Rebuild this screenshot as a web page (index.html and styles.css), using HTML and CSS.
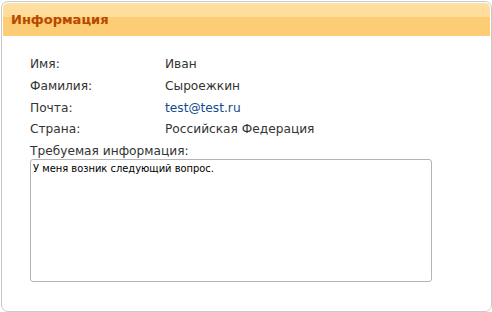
FILE: index.html
```html
<!DOCTYPE html>
<html lang="ru">
<head>
<meta charset="utf-8">
<title>Информация</title>
<link rel="stylesheet" href="styles.css">
</head>
<body>
<div class="panel">
  <div class="panel-head"><h2 class="panel-title">Информация</h2></div>
  <div class="panel-body">
    <dl class="info">
      <dt>Имя:</dt><dd>Иван</dd>
      <dt>Фамилия:</dt><dd>Сыроежкин</dd>
      <dt>Почта:</dt><dd><a class="mail" href="#">test@test.ru</a></dd>
      <dt>Страна:</dt><dd>Российская Федерация</dd>
    </dl>
    <div class="req-label">Требуемая информация:</div>
    <textarea class="req-text">У меня возник следующий вопрос.</textarea>
  </div>
</div>
</body>
</html>
```
FILE: styles.css
```css
html, body { margin: 0; padding: 0; background: #fff; }
body { padding: 1px 0 0 1px; font-family: "DejaVu Sans", Verdana, sans-serif; }
.panel {
  width: 487px;
  height: 307px;
  border: 1px solid #c9c9c9;
  border-radius: 7px;
  padding: 1px;
  box-sizing: content-box;
  display: flex;
  flex-direction: column;
}
.panel-head {
  height: 33px;
  border-radius: 5px 5px 0 0;
  background: linear-gradient(#fee0a3 0, #fedc9b 14px, #fdcd75 14px, #fdcd75 100%);
  display: flex;
  align-items: center;
  padding: 0 0 0 8px;
}
.panel-title {
  margin: 0;
  font-size: 13px;
  font-weight: bold;
  color: #b64800;
}
.panel-body {
  padding: 18px 0 0 27px;
  font-size: 12.2px;
  color: #333;
}
.info {
  margin: 0;
  display: grid;
  grid-template-columns: 135px auto;
  line-height: 21.75px;
}
.info dt, .info dd { margin: 0; }
.mail { color: #134a8e; text-decoration: none; }
.req-label { line-height: 21.75px; height: 18px; }
.req-text {
  display: block;
  margin: 0;
  width: 402px;
  height: 123px;
  box-sizing: border-box;
  border: 1px solid #b4b4b4;
  border-radius: 3px;
  padding: 2px 2px 1px;
  font-family: Tahoma, "DejaVu Sans Condensed", sans-serif;
  font-size: 11px;
  color: #000;
  resize: none;
  outline: none;
}
```
